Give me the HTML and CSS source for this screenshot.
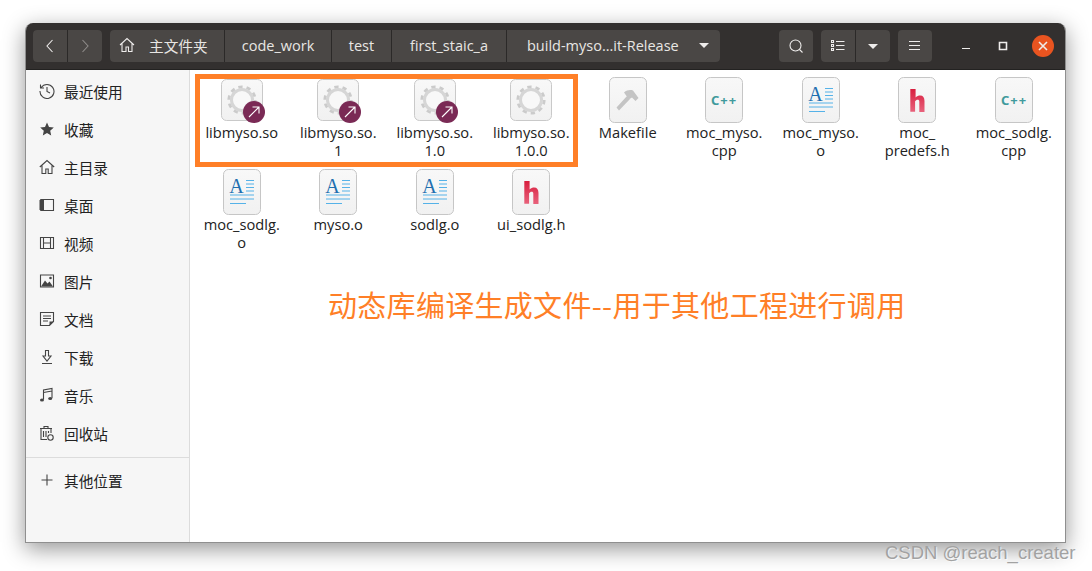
FILE: index.html
```html
<!DOCTYPE html>
<html lang="zh">
<head>
<meta charset="utf-8">
<title>Files</title>
<link rel="stylesheet" href="styles.css">
</head>
<body>
<svg class="defs" width="0" height="0" aria-hidden="true">
  <defs>
    <linearGradient id="paper" x1="0" y1="0" x2="0" y2="1"><stop offset="0" stop-color="#f8f8f8"/><stop offset="1" stop-color="#f1f1f1"/></linearGradient>
    <linearGradient id="red" x1="0" y1="0" x2="0" y2="1"><stop offset="0" stop-color="#d81e3e"/><stop offset="1" stop-color="#e8627c"/></linearGradient>
    <symbol id="gear" viewBox="0 0 48 48">
      <rect x="3.5" y="3.5" width="41" height="41" rx="5" fill="url(#paper)" stroke="#c9c9c9"/>
      <circle cx="24" cy="24" r="13.200" fill="none" stroke="#cbcbcb" stroke-width="2.800" stroke-dasharray="4.300 4"/>
      <circle cx="24" cy="24" r="10.500" fill="#f8f8f8" stroke="#d6d6d6" stroke-width="3"/>
    </symbol>
    <symbol id="badge" viewBox="0 0 22 22">
      <circle cx="11" cy="11" r="11" fill="#7a2a55"/>
      <path d="M6 16 16 6M9.500 6H16V12.500" fill="none" stroke="#fff" stroke-width="1.100"/>
    </symbol>
    <symbol id="doc" viewBox="0 0 48 48">
      <rect x="5.500" y="1.500" width="37" height="45" rx="5" fill="url(#paper)" stroke="#c6c6c6"/>
      <text x="18.500" y="25" text-anchor="middle" class="glyph-a">A</text>
      <path d="M28 12.500h8M28 16h8M28 19.500h8M28 23h8M12 27h24M12 31h24M12 35.500h16" stroke="#55b2e8" stroke-width="1"/>
    </symbol>
    <symbol id="hdr" viewBox="0 0 48 48">
      <rect x="5.500" y="1.500" width="37" height="45" rx="5" fill="url(#paper)" stroke="#c6c6c6"/>
      <path d="M17.300 13h5.300v8.500c1.500-1.500 3-2 4.500-2 3 0 4.400 2 4.400 5.500v11h-5.200V25.500c0-1.200-.6-1.800-1.700-1.800-1 0-1.800.6-2.500 1.500v10.500h-4.800z" fill="url(#red)"/>
    </symbol>
    <symbol id="cpp" viewBox="0 0 48 48">
      <rect x="5.500" y="1.500" width="37" height="45" rx="5" fill="url(#paper)" stroke="#c6c6c6"/>
      <text x="24" y="28.500" text-anchor="middle" class="glyph-c">C++</text>
    </symbol>
    <symbol id="make" viewBox="0 0 48 48">
      <rect x="5.500" y="1.500" width="37" height="45" rx="5" fill="url(#paper)" stroke="#c6c6c6"/>
      <path d="M12.500 31.500 23 20l3 3L15 34.500zM20 16.500c3-2.500 6-3 9-2l5.500 7.500-3 3-3.500-3.500-2.500 1.500-3-3z" fill="#c4c4c4"/>
    </symbol>
  </defs>
</svg>

<main class="window">
  <header class="topbar">
    <div class="group nav">
      <button class="seg nav-btn"><svg width="16" height="16" viewBox="0 0 16 16"><path d="M10.500 2 5 8l5.500 6" class="line"/></svg></button>
      <button class="seg nav-btn dim"><svg width="16" height="16" viewBox="0 0 16 16"><path d="M5.500 2 11 8l-5.500 6" class="line"/></svg></button>
    </div>
    <nav class="group path">
      <span class="seg crumb crumb-home"><svg width="16" height="16" viewBox="0 0 16 16"><path d="M1 8 8 1.500 15 8M3 6.500V14.500h4V10h2.500v4.500H13V6.500" class="line"/></svg><span>主文件夹</span></span>
      <span class="seg crumb crumb-code">code_work</span>
      <span class="seg crumb crumb-test">test</span>
      <span class="seg crumb crumb-first">first_staic_a</span>
      <span class="seg crumb crumb-build"><span>build-myso…it-Release</span><i class="caret"></i></span>
    </nav>
    <div class="tools">
      <button class="seg tool"><svg width="16" height="16" viewBox="0 0 16 16"><circle cx="7.500" cy="7.500" r="5.500" class="line"/><path d="m11.500 11.500 3 3" class="line"/></svg></button>
      <div class="group view">
        <button class="seg tool"><svg width="14" height="12" viewBox="0 0 14 12"><path d="M.5.500h2v2h-2zM.5 4.500h2v2h-2zM.5 8.500h2v2h-2zM5 1.500h8.500M5 5.500h8.500M5 9.500h8.500" class="line"/></svg></button>
        <button class="seg tool"><i class="caret"></i></button>
      </div>
      <button class="seg tool"><svg width="14" height="12" viewBox="0 0 14 12"><path d="M1 1.500h11M1 5.500h11M1 9.500h11" class="line"/></svg></button>
    </div>
    <div class="winctl">
      <button class="ctl"><svg width="10" height="10" viewBox="0 0 10 10"><path d="M0 7.500h8" class="line"/></svg></button>
      <button class="ctl"><svg width="10" height="10" viewBox="0 0 10 10"><path d="M1.500 1.500h7v7h-7z" class="line thick"/></svg></button>
      <button class="ctl close"><svg width="10" height="10" viewBox="0 0 10 10"><path d="m1 1 8 8M9 1 1 9" class="line thick"/></svg></button>
    </div>
  </header>

  <div class="body">
    <aside class="sidebar">
      <a class="place"><svg viewBox="0 0 16 16"><path d="M2.200 4.500A7 7 0 1 1 1 8M1.500 1.500v3.500H5M8 4v4.500l3 1.500" class="ink"/></svg><span>最近使用</span></a>
      <a class="place"><svg viewBox="0 0 16 16"><path d="m8 1.500 2 4.500 4.800.5-3.600 3.200 1 4.800L8 12l-4.200 2.500 1-4.800L1.200 6.500 6 6z" class="solid"/></svg><span>收藏</span></a>
      <a class="place"><svg viewBox="0 0 16 16"><path d="M.800 8 8 1.500 15.200 8M3 6.500v8h3.800V10h2.400v4.500H13v-8" class="ink"/></svg><span>主目录</span></a>
      <a class="place"><svg viewBox="0 0 16 16"><path d="M2 2.500h12.500v11H2z" class="ink"/><path d="M.5 3.500 2 2h3v12H2L.5 12.500z" class="solid"/></svg><span>桌面</span></a>
      <a class="place"><svg viewBox="0 0 16 16"><path d="M1.500 2.500h13v11h-13zM4.500 2.500v11M11.500 2.500v11M4.500 8h7" class="ink"/></svg><span>视频</span></a>
      <a class="place"><svg viewBox="0 0 16 16"><path d="M1.500 2h13v12h-13z" class="ink"/><path d="m2 13.500 4-6 2.500 3 2-2 3.500 5z" class="solid"/><circle cx="11.500" cy="5" r="1.300" class="solid"/></svg><span>图片</span></a>
      <a class="place"><svg viewBox="0 0 16 16"><path d="M1.500 1.500h13v9l-4 4h-9zM4 5h8M4 7.500h8M4 10h5" class="ink"/><path d="M10.500 14.500v-4h4z" class="solid"/></svg><span>文档</span></a>
      <a class="place"><svg viewBox="0 0 16 16"><path d="M6.500 1.500h3V7H12l-4 5-4-5h2.500zM3 14.500h10" class="ink"/></svg><span>下载</span></a>
      <a class="place"><svg viewBox="0 0 16 16"><path d="M4.500 12.500V3L13 1.500V11M4.500 5.500 13 4" class="ink"/><ellipse cx="3" cy="13" rx="2" ry="1.600" class="solid"/><ellipse cx="11.200" cy="11.500" rx="2" ry="1.600" class="solid"/></svg><span>音乐</span></a>
      <a class="place"><svg viewBox="0 0 16 16"><path d="M1 3.500h12M5 3.500V1.500h4v2M2 3.500v11h6M12 3.500V8M4.500 6v6M7 6v6M9.500 6v2" class="ink"/><circle cx="11.500" cy="12.500" r="2.700" class="ink"/></svg><span>回收站</span></a>
      <hr class="rule">
      <a class="place"><svg viewBox="0 0 16 16"><path d="M8 2.500v11M2.500 8h11" class="ink"/></svg><span>其他位置</span></a>
    </aside>

    <section class="files">
      <div class="file"><span class="icon"><svg width="48" height="48"><use href="#gear"/></svg><svg class="link" width="22" height="22"><use href="#badge"/></svg></span><span class="name">libmyso.so</span></div>
      <div class="file"><span class="icon"><svg width="48" height="48"><use href="#gear"/></svg><svg class="link" width="22" height="22"><use href="#badge"/></svg></span><span class="name">libmyso.so.<br>1</span></div>
      <div class="file"><span class="icon"><svg width="48" height="48"><use href="#gear"/></svg><svg class="link" width="22" height="22"><use href="#badge"/></svg></span><span class="name">libmyso.so.<br>1.0</span></div>
      <div class="file"><span class="icon"><svg width="48" height="48"><use href="#gear"/></svg></span><span class="name">libmyso.so.<br>1.0.0</span></div>
      <div class="file"><span class="icon"><svg width="48" height="48"><use href="#make"/></svg></span><span class="name">Makefile</span></div>
      <div class="file"><span class="icon"><svg width="48" height="48"><use href="#cpp"/></svg></span><span class="name">moc_myso.<br>cpp</span></div>
      <div class="file"><span class="icon"><svg width="48" height="48"><use href="#doc"/></svg></span><span class="name">moc_myso.<br>o</span></div>
      <div class="file"><span class="icon"><svg width="48" height="48"><use href="#hdr"/></svg></span><span class="name">moc_<br>predefs.h</span></div>
      <div class="file"><span class="icon"><svg width="48" height="48"><use href="#cpp"/></svg></span><span class="name">moc_sodlg.<br>cpp</span></div>
      <div class="file"><span class="icon"><svg width="48" height="48"><use href="#doc"/></svg></span><span class="name">moc_sodlg.<br>o</span></div>
      <div class="file"><span class="icon"><svg width="48" height="48"><use href="#doc"/></svg></span><span class="name">myso.o</span></div>
      <div class="file"><span class="icon"><svg width="48" height="48"><use href="#doc"/></svg></span><span class="name">sodlg.o</span></div>
      <div class="file"><span class="icon"><svg width="48" height="48"><use href="#hdr"/></svg></span><span class="name">ui_sodlg.h</span></div>
    </section>
  </div>
</main>

<div class="frame"></div>
<p class="note">动态库编译生成文件--用于其他工程进行调用</p>
<p class="mark">CSDN @reach_creater</p>
</body>
</html>
```
FILE: styles.css
```css
* { box-sizing: border-box; }
html, body { margin: 0; height: 100%; overflow: hidden; background: #fff; }
body {
  position: relative;
  padding: 23px 25px 28px;
  font-family: "Open Sans", "Noto Sans CJK SC", sans-serif;
  color: #222;
}
.defs { position: absolute; }
.glyph-a { font: 20px "Liberation Serif", serif; fill: #1f6fb0; }
.glyph-c { font: bold 13px "Noto Sans", sans-serif; fill: #3f9a9c; letter-spacing: 1px; }

.window {
  width: 1041px;
  height: 520px;
  display: flex;
  flex-direction: column;
  border-radius: 8px 8px 0 0;
  border: 1px solid #8f8f8f;
  border-top: 0;
  background: #fff;
  box-shadow: 0 6px 22px rgba(0, 0, 0, .42);
  overflow: hidden;
}
.topbar {
  flex: 0 0 47px;
  display: flex;
  align-items: center;
  padding: 0 0 0 7px;
  background: #33302f;
  border-bottom: 1px solid #232221;
  color: #e8e6e3;
  font-size: 14.5px;
}
.line { fill: none; stroke: #eeeceb; stroke-width: 1.1; }
.thick { stroke-width: 1.6; }
.dim .line { stroke: #8f8c8a; }
.group { display: flex; height: 32px; border-radius: 4px; overflow: hidden; gap: 1px; background: #2b2928; }
.seg {
  display: flex;
  align-items: center;
  justify-content: center;
  height: 32px;
  background: #4a4745;
  color: inherit;
  border: 0;
  padding: 0;
  font: inherit;
}
.nav { width: 69px; }
.nav-btn { flex: 1; }
.path { margin-left: 8px; width: 610px; }
.crumb { flex: none; padding-bottom: 2px; }
.crumb-home { width: 114px; justify-content: flex-start; padding-left: 9px; gap: 14px; font-size: 14.67px; }
.crumb-code { width: 106px; }
.crumb-test { width: 59px; }
.crumb-first { width: 114px; }
.crumb-build { flex: 1; justify-content: space-between; padding: 0 11px 2px 20px; }
.caret { display: block; width: 0; height: 0; border: 5px solid transparent; border-top: 5px solid #eeeceb; border-bottom: 0; }
.tools { display: flex; margin-left: 59px; gap: 8px; }
.tool { width: 34px; border-radius: 4px; }
.view .tool { border-radius: 0; }
.view { width: 69px; }
.winctl { display: flex; align-items: center; margin-left: 17px; }
.ctl {
  width: 36px;
  height: 32px;
  display: flex;
  align-items: center;
  justify-content: center;
  background: none;
  border: 0;
  padding: 0;
}
.close { width: 22px; height: 22px; margin-left: 11px; border-radius: 50%; background: #e95420; }

.body { flex: 1; display: flex; min-height: 0; }
.sidebar {
  flex: 0 0 164px;
  padding-top: 2px;
  background: #f6f6f6;
  border-right: 1px solid #dcdcdc;
  font-size: 14.67px;
}
.place { display: flex; align-items: center; height: 38px; padding-left: 13px; gap: 9px; color: #222; }
.place svg { width: 16px; height: 16px; flex: none; }
.ink { fill: none; stroke: #444; stroke-width: 1.1; }
.solid { fill: #444; }
.rule { height: 1px; margin: 5px 0 3px; border: 0; background: #dcdcdc; }

.files {
  flex: 1;
  display: grid;
  grid-template-columns: repeat(9, 96.5px);
  grid-auto-rows: 92px;
  align-content: start;
  padding: 4px 0 0 3.5px;
  font-size: 14.67px;
}
.file { display: flex; flex-direction: column; align-items: center; padding-top: 2px; }
.icon { position: relative; display: block; width: 48px; height: 48px; }
.icon > svg { display: block; }
.icon .link { position: absolute; left: 25px; top: 25px; }
.name { margin-top: -1px; line-height: 18px; text-align: center; color: #222; }

.frame {
  position: absolute;
  left: 195px;
  top: 74px;
  width: 383px;
  height: 93px;
  border: 5px solid #ff7f27;
}
.note {
  position: absolute;
  left: 328px;
  top: 284px;
  margin: 0;
  font-size: 29px;
  line-height: 40px;
  letter-spacing: .3px;
  font-family: "Noto Sans CJK SC", sans-serif;
  color: #ff7f27;
  white-space: nowrap;
}
.mark {
  position: absolute;
  left: 885px;
  top: 543px;
  margin: 0;
  font: 18.500px/20px "Liberation Sans", sans-serif;
  color: #a2a2a2;
  text-shadow: 1px 1px 1px rgba(255, 255, 255, .8);
  white-space: nowrap;
}
```
